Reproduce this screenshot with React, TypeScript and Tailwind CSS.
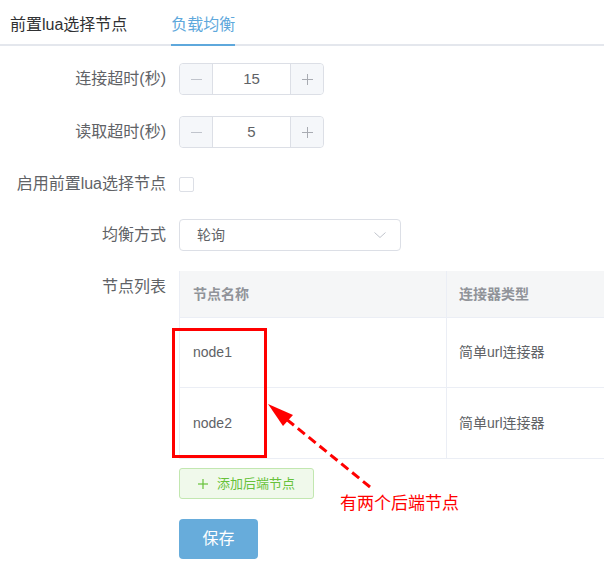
// Load-balancing tab of the route editor, with the screenshot's red
// annotation (box + dashed arrow + note) laid over the node table.

const FONT = "font-['Liberation_Sans','Noto_Sans_CJK_SC',sans-serif]";

function NumberInput({ value }: { value: string }) {
  return (
    <div className="flex h-[32px] w-[145px] rounded-[4px] border border-[#dcdfe6] bg-white">
      <div className="flex w-[33px] items-center justify-center rounded-l-[4px] border-r border-[#dcdfe6] bg-[#f5f7fa]">
        <svg width="11" height="11" viewBox="0 0 11 11">
          <line x1="0" y1="5.5" x2="11" y2="5.5" stroke="#c0c4cc" strokeWidth="1" />
        </svg>
      </div>
      <div className="flex flex-1 items-center justify-center text-[15px] text-[#606266]">
        {value}
      </div>
      <div className="flex w-[33px] items-center justify-center rounded-r-[4px] border-l border-[#dcdfe6] bg-[#f5f7fa]">
        <svg width="11" height="11" viewBox="0 0 11 11">
          <line x1="0" y1="5.5" x2="11" y2="5.5" stroke="#a8abb2" strokeWidth="1" />
          <line x1="5.5" y1="0" x2="5.5" y2="11" stroke="#a8abb2" strokeWidth="1" />
        </svg>
      </div>
    </div>
  );
}

function FormRow({
  label,
  className,
  children,
}: {
  label: string;
  className?: string;
  children: React.ReactNode;
}) {
  return (
    <div className={`flex items-start ${className ?? ""}`}>
      <div className="w-[166px] shrink-0 text-right text-[16px] leading-[32px] text-[#606266]">
        {label}
      </div>
      <div className="ml-[13px] flex min-h-[32px] items-center">{children}</div>
    </div>
  );
}

const nodes = [
  { name: "node1", type: "简单url连接器", h: "h-[70px]" },
  { name: "node2", type: "简单url连接器", h: "h-[71px]" },
];

export default function App() {
  return (
    <div className={`relative h-[584px] w-[604px] overflow-hidden bg-white ${FONT}`}>
      {/* tabs */}
      <div className="flex h-[46px] items-stretch border-b-2 border-[#e4e7ed] pt-[5px] text-[16px]">
        <div className="ml-[10px] flex items-center text-[#303133]">前置lua选择节点</div>
        <div className="-mb-[2px] ml-[44px] flex items-center border-b-2 border-[#5ea8dc] text-[#5ea8dc]">
          负载均衡
        </div>
      </div>

      <div className="pt-[17px]">
        <FormRow label="连接超时(秒)" className="mb-[21px]">
          <NumberInput value="15" />
        </FormRow>
        <FormRow label="读取超时(秒)" className="mb-[20px]">
          <NumberInput value="5" />
        </FormRow>
        <FormRow label="启用前置lua选择节点" className="mb-[19px]">
          <div className="h-[15px] w-[15px] rounded-[2px] border border-[#dcdfe6] bg-white" />
        </FormRow>
        <FormRow label="均衡方式" className="mb-[20px]">
          <div className="flex h-[32px] w-[222px] items-center justify-between rounded-[4px] border border-[#dcdfe6] pl-[17px] pr-[14px] text-[14px] text-[#606266]">
            <span>轮询</span>
            <svg width="12" height="6" viewBox="0 0 12 6">
              <polyline points="0.5,0.5 6,5.5 11.5,0.5" fill="none" stroke="#c0c4cc" strokeWidth="1" />
            </svg>
          </div>
        </FormRow>
        <FormRow label="节点列表">
          <div className="flex flex-col">
            <div className="w-[560px] border-l border-[#ebeef5] text-[14px]">
              <div className="flex h-[47px] border-b border-[#ebeef5] bg-[#f5f6f7] font-bold text-[#909399]">
                <div className="flex w-[267px] items-center border-r border-[#ebeef5] pl-[13px]">节点名称</div>
                <div className="flex flex-1 items-center pl-[12px]">连接器类型</div>
              </div>
              {nodes.map((n) => (
                <div key={n.name} className={`flex ${n.h} border-b border-[#ebeef5] text-[#606266]`}>
                  <div className="flex w-[267px] items-center border-r border-[#ebeef5] pl-[13px]">{n.name}</div>
                  <div className="flex flex-1 items-center pl-[12px]">{n.type}</div>
                </div>
              ))}
            </div>
            <button className="mt-[9px] flex h-[31px] w-[135px] items-center justify-center gap-[9px] rounded-[3px] border border-[#c2e7b0] bg-[#f0f9eb] text-[13px] text-[#67c23a]">
              <svg width="10" height="10" viewBox="0 0 10 10">
                <line x1="0" y1="5" x2="10" y2="5" stroke="#67c23a" strokeWidth="1.2" />
                <line x1="5" y1="0" x2="5" y2="10" stroke="#67c23a" strokeWidth="1.2" />
              </svg>
              添加后端节点
            </button>
            <button className="mt-[20px] h-[40px] w-[79px] rounded-[4px] bg-[#67acdb] text-[16px] text-white">
              保存
            </button>
          </div>
        </FormRow>
      </div>

      {/* annotation overlay */}
      <div className="absolute left-[172px] top-[328px] h-[130px] w-[95px] border-[3px] border-[#ff0000]" />
      <svg className="absolute left-0 top-0" width="604" height="584" viewBox="0 0 604 584">
        <line
          x1="370"
          y1="487"
          x2="285"
          y2="418"
          stroke="#ff0000"
          strokeWidth="3"
          strokeDasharray="9 5"
        />
        <polygon points="268,404 293,415 283,426" fill="#ff0000" />
      </svg>
      <div className="absolute left-[340px] top-[495px] text-[17px] leading-[17px] text-[#ff0000]">
        有两个后端节点
      </div>
    </div>
  );
}
